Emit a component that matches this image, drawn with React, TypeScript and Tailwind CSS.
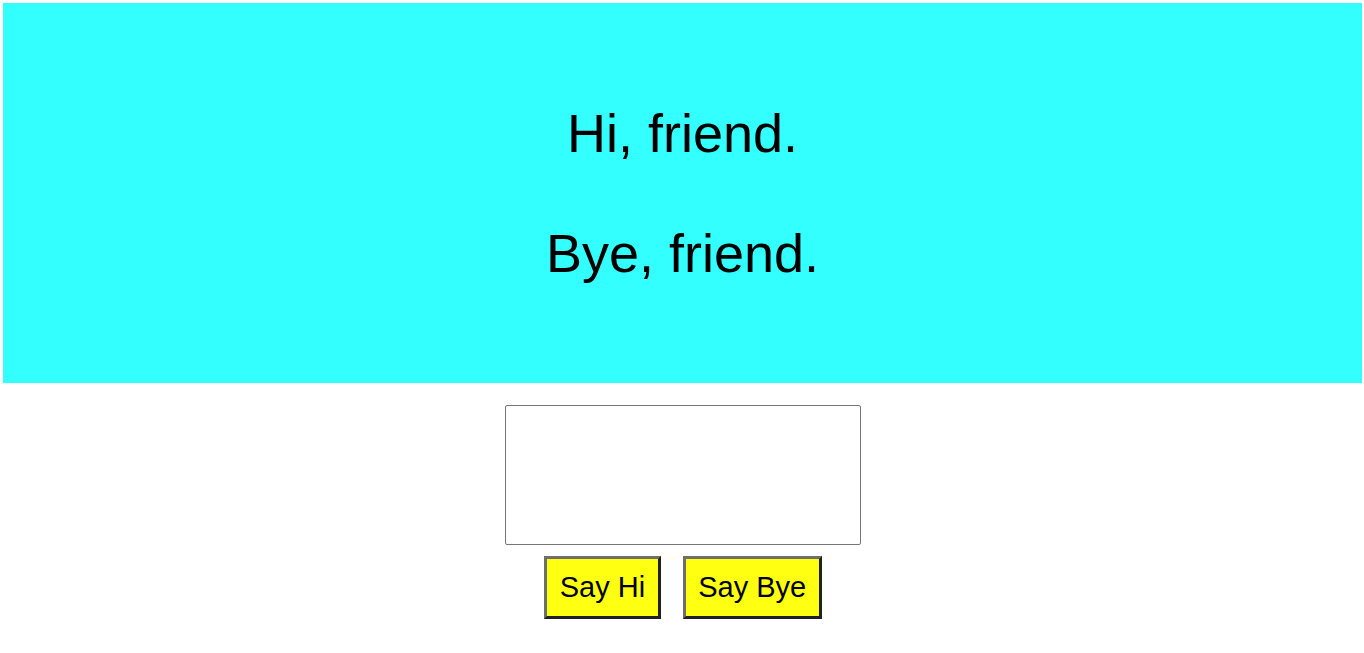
import { useState } from "react";

export default function App() {
  const [text, setText] = useState("");

  return (
    <div
      className="min-h-screen bg-white pt-[3px] pl-[3px]"
      style={{ fontFamily: '"Liberation Sans", Arial, sans-serif' }}
    >
      {/* Greeting panel */}
      <div className="flex h-[380px] w-[1359px] flex-col items-center justify-center gap-[58px] bg-[#33ffff] text-black">
        <h1 className="text-[54px] leading-[62px] font-normal">Hi, friend.</h1>
        <h1 className="text-[54px] leading-[62px] font-normal">Bye, friend.</h1>
      </div>

      {/* Controls */}
      <div className="flex w-[1359px] flex-col items-center pt-[22px]">
        <textarea
          value={text}
          onChange={(e) => setText(e.target.value)}
          className="ml-[1px] h-[140px] w-[356px] resize-none rounded-[2px] border border-[#767676] bg-white outline-none"
        />
        <div className="ml-[1px] mt-[11px] flex gap-[22px]">
          <button className="border-[3px] border-solid border-t-[#6e6e6e] border-l-[#6e6e6e] border-r-[#202020] border-b-[#202020] bg-[#ffff11] px-[12.5px] py-[12px] text-[29px] leading-[33px] text-black">
            Say Hi
          </button>
          <button className="border-[3px] border-solid border-t-[#6e6e6e] border-l-[#6e6e6e] border-r-[#202020] border-b-[#202020] bg-[#ffff11] px-[12.5px] py-[12px] text-[29px] leading-[33px] text-black">
            Say Bye
          </button>
        </div>
      </div>
    </div>
  );
}
